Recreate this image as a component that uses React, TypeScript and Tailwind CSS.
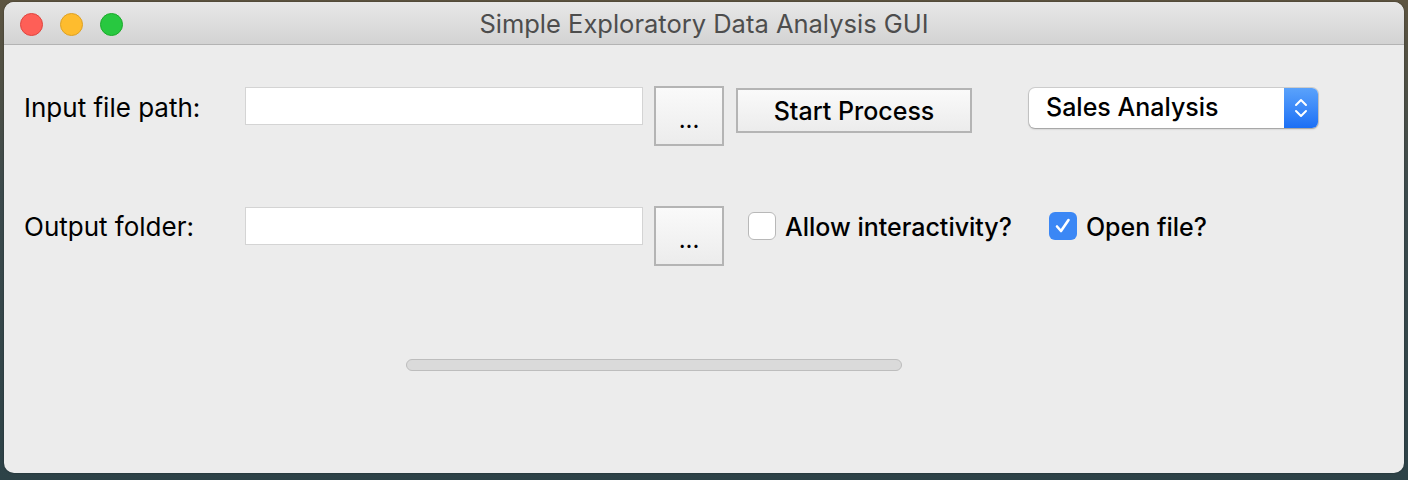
import React from "react";

function TrafficLights() {
  return (
    <div className="flex items-center gap-[17px] pl-[16px] mt-[3px]">
      <div className="w-[23px] h-[23px] rounded-full bg-[#fe5f57] border border-[#e0443e]" />
      <div className="w-[23px] h-[23px] rounded-full bg-[#febc2e] border border-[#dea123]" />
      <div className="w-[23px] h-[23px] rounded-full bg-[#28c840] border border-[#1aab29]" />
    </div>
  );
}

function TextField() {
  return <div className="w-[398px] h-[38px] bg-white border border-[#d4d4d4]" />;
}

function BrowseButton() {
  return (
    <button className="w-[70px] h-[60px] ml-[11px] border-2 border-[#b4b4b4] bg-gradient-to-b from-[#fafafa] to-[#ececec] flex items-end justify-center pb-[12px] text-[24px] leading-none text-black">
      ...
    </button>
  );
}

function Checkbox({ checked }: { checked?: boolean }) {
  if (checked) {
    return (
      <div className="w-[28px] h-[28px] rounded-[6px] bg-[#3b87f5] flex items-center justify-center">
        <svg width="22" height="22" viewBox="0 0 22 22">
          <path d="M5 11.5 L9 16 L16.5 5" fill="none" stroke="white" strokeWidth="2.6" strokeLinecap="round" strokeLinejoin="round" />
        </svg>
      </div>
    );
  }
  return <div className="w-[28px] h-[28px] rounded-[6px] bg-white border border-[#b8b8b8]" />;
}

export default function App() {
  return (
    <div className="w-[1408px] h-[480px] bg-[linear-gradient(180deg,#5d5440_0%,#3c4a4c_40%,#2d4247_100%)] pl-[4px] pt-[2px] font-['Inter','Liberation_Sans',sans-serif] text-black">
      <div className="w-[1400px] h-[471px] rounded-[10px] overflow-hidden bg-[#ececec] flex flex-col shadow-[0_0_2px_rgba(0,0,0,0.4)]">
        {/* Title bar */}
        <div className="relative h-[43px] shrink-0 bg-gradient-to-b from-[#e8e8e8] to-[#d3d3d3] border-b border-[#b3b3b3] flex items-center">
          <TrafficLights />
          <div className="absolute inset-0 flex items-center justify-center text-[25.5px] text-[#4d4d4d] pt-[2px]">
            Simple Exploratory Data Analysis GUI
          </div>
        </div>

        {/* Content */}
        <div className="flex flex-col pt-[41px] pl-[20px]">
          {/* Row 1 */}
          <div className="flex items-start h-[60px]">
            <div className="w-[221px] h-[38px] mt-[2px] flex items-center text-[26px]">Input file path:</div>
            <div className="mt-[1px]">
              <TextField />
            </div>
            <BrowseButton />
            <button className="ml-[12px] mt-[2px] w-[236px] h-[45px] border-2 border-[#b4b4b4] bg-gradient-to-b from-[#fafafa] to-[#ececec] text-[25px] font-medium flex items-center justify-center pt-[2px]">
              Start Process
            </button>
            <div className="ml-[57px] mt-[2px] w-[289px] h-[40px] rounded-[6px] bg-white shadow-[0_0_0_1px_rgba(0,0,0,0.12),0_1px_2px_rgba(0,0,0,0.25)] flex overflow-hidden">
              <div className="flex-1 flex items-center pl-[17px] text-[25px] font-medium">Sales Analysis</div>
              <div className="w-[34px] bg-gradient-to-b from-[#5aa2fb] to-[#1b6ff5] flex items-center justify-center">
                <svg width="16" height="26" viewBox="0 0 16 26">
                  <path d="M3 10 L8 5 L13 10" fill="none" stroke="white" strokeWidth="2" strokeLinecap="round" strokeLinejoin="round" />
                  <path d="M3 16 L8 21 L13 16" fill="none" stroke="white" strokeWidth="2" strokeLinecap="round" strokeLinejoin="round" />
                </svg>
              </div>
            </div>
          </div>

          {/* Row 2 */}
          <div className="flex items-start h-[60px] mt-[60px]">
            <div className="w-[221px] h-[38px] mt-[1px] flex items-center text-[26px]">Output folder:</div>
            <div className="mt-[1px]">
              <TextField />
            </div>
            <BrowseButton />
            <div className="ml-[24px] mt-[6px] flex items-center gap-[9px] text-[25px] leading-[28px] font-medium">
              <Checkbox />
              <span className="relative top-[1px]">Allow interactivity?</span>
            </div>
            <div className="ml-[37px] mt-[6px] flex items-center gap-[9px] text-[25px] leading-[28px] font-medium">
              <Checkbox checked />
              <span className="relative top-[1px]">Open file?</span>
            </div>
          </div>

          {/* Progress bar */}
          <div className="mt-[93px] ml-[382px] w-[496px] h-[12px] rounded-full bg-[#dadada] border border-[#bdbdbd]" />
        </div>
      </div>
    </div>
  );
}
